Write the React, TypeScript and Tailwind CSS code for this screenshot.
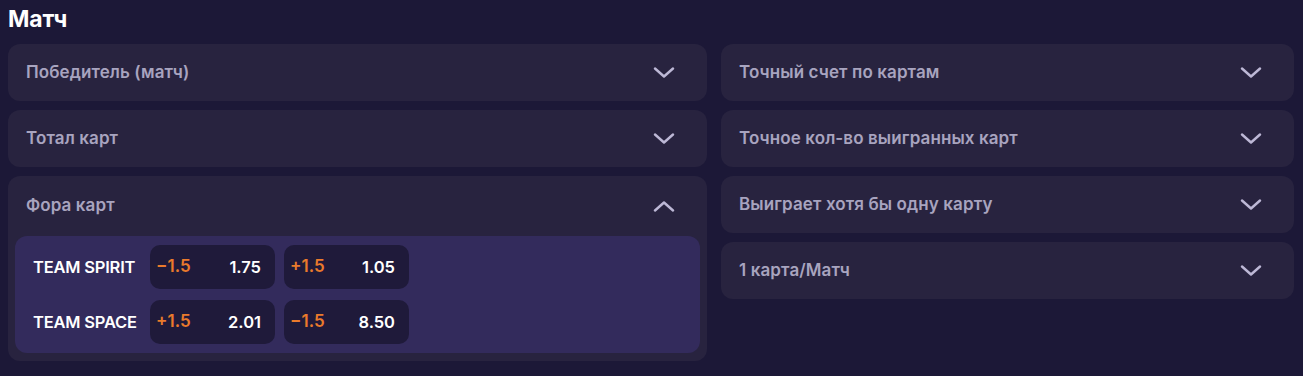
import { useState } from 'react';

const leftMarkets = ['Победитель (матч)', 'Тотал карт'];
const rightMarkets = [
  'Точный счет по картам',
  'Точное кол-во выигранных карт',
  'Выиграет хотя бы одну карту',
  '1 карта/Матч'
];

const handicapRows = [
  {
    team: 'TEAM SPIRIT',
    odds: [
      { line: '−1.5', value: '1.75' },
      { line: '+1.5', value: '1.05' }
    ]
  },
  {
    team: 'TEAM SPACE',
    odds: [
      { line: '+1.5', value: '2.01' },
      { line: '−1.5', value: '8.50' }
    ]
  }
];

function Chevron({ up = false }: { up?: boolean }) {
  return (
    <svg width="22" height="12" viewBox="0 0 22 12" fill="none" className="shrink-0">
      <path
        d={up ? 'M2 10.5L11 2.5L20 10.5' : 'M2 1.5L11 9.5L20 1.5'}
        stroke="#bdb8d6"
        strokeWidth="2.4"
        strokeLinecap="round"
        strokeLinejoin="round"
      />
    </svg>
  );
}

function MarketRow({ title }: { title: string }) {
  return (
    <div className="flex h-[57px] items-center justify-between rounded-[12px] bg-[#28233f] pl-[18px] pr-[32px]">
      <span className="text-[17px] font-semibold tracking-[0.1px] text-[#a8a4bf]">{title}</span>
      <Chevron />
    </div>
  );
}

export default function App() {
  const [open, setOpen] = useState(true);

  return (
    <div
      className="h-[376px] w-[1303px] overflow-hidden bg-[#1c1837] px-[8px] pt-[4px]"
      style={{ fontFamily: 'Inter, "Noto Sans", sans-serif' }}
    >
      <h2 className="mb-[10px] text-[23px] font-bold leading-[30px] tracking-[-0.2px] text-white">Матч</h2>

      <div className="flex gap-[14px]">
        <div className="flex w-[699px] flex-col gap-[9px]">
          {leftMarkets.map((m) => (
            <MarketRow key={m} title={m} />
          ))}

          <div className="rounded-[12px] bg-[#28233f] px-[7px] pb-[8px]">
            <button
              onClick={() => setOpen(!open)}
              className="flex h-[60px] w-full items-center justify-between pl-[11px] pr-[25px]"
            >
              <span className="text-[17px] font-semibold tracking-[0.1px] text-[#a8a4bf]">Фора карт</span>
              <Chevron up={open} />
            </button>
            {open && (
              <div className="flex flex-col gap-[11px] rounded-[12px] bg-[#332b5c] px-[18px] py-[9px]">
                {handicapRows.map((row) => (
                  <div key={row.team} className="flex items-center">
                    <span className="w-[117px] text-[16.5px] font-semibold tracking-[-0.2px] text-white">
                      {row.team}
                    </span>
                    <div className="flex gap-[9px]">
                      {row.odds.map((o, i) => (
                        <div
                          key={i}
                          className="flex h-[44px] w-[125px] items-center justify-between rounded-[10px] bg-[#1f1a3a] pl-[6px] pr-[14px]"
                        >
                          <span className="text-[17px] font-semibold text-[#ea7a2c]">{o.line}</span>
                          <span className="text-[16.5px] font-semibold text-white">{o.value}</span>
                        </div>
                      ))}
                    </div>
                  </div>
                ))}
              </div>
            )}
          </div>
        </div>

        <div className="flex w-[573px] flex-col gap-[9px]">
          {rightMarkets.map((m) => (
            <MarketRow key={m} title={m} />
          ))}
        </div>
      </div>
    </div>
  );
}
